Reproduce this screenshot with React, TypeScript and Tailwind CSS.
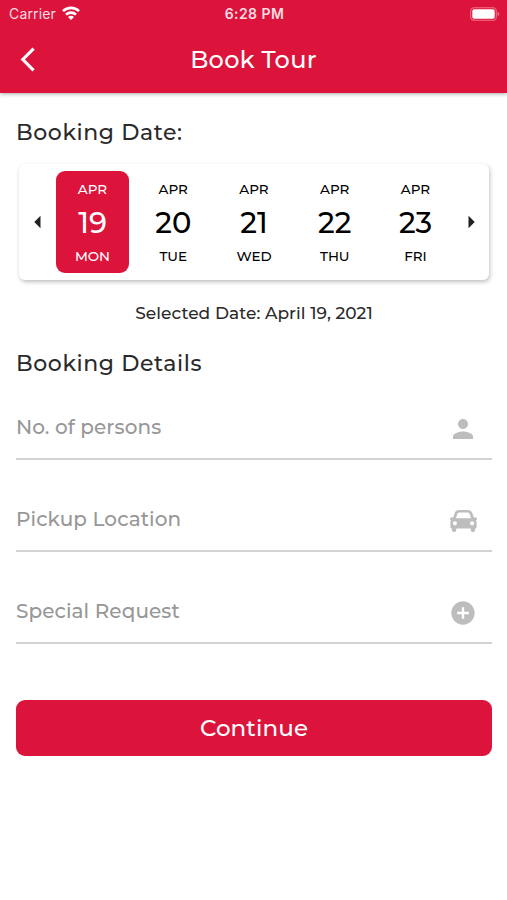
import React, { useState } from "react";
import { MdAddCircle, MdArrowLeft, MdArrowRight, MdPerson } from "react-icons/md";

type dayType = {
  date: number;
  day: string;
};

type fieldPropType = {
  label: string;
  icon: React.ReactNode;
};

const days: dayType[] = [
  { date: 19, day: "MON" },
  { date: 20, day: "TUE" },
  { date: 21, day: "WED" },
  { date: 22, day: "THU" },
  { date: 23, day: "FRI" },
];

const StatusBar = () => (
  <div className="grid h-7 grid-cols-3 items-center pl-[9px] pr-[7px] font-['Inter',sans-serif] text-[#fbdde3]">
    <div className="-mt-px flex items-center gap-[6px]">
      <span className="text-[14px] font-normal tracking-[0.15px]">Carrier</span>
      <svg className="mb-px h-[14px] w-[18px]" viewBox="0 0 18 14" fill="none" stroke="white" strokeWidth="2.6">
        <path d="M1 5.2a11.3 11.3 0 0 1 16 0" />
        <path d="M4 8.7a7.1 7.1 0 0 1 10 0" />
        <path d="M9 14L6 11a4.2 4.2 0 0 1 6 0z" fill="white" stroke="none" />
      </svg>
    </div>
    <span className="-mt-px text-center text-[14px] font-semibold tracking-[0.45px]">6:28 PM</span>
    <svg className="mb-px h-[14px] w-[30px] justify-self-end" viewBox="0 0 30 14">
      <rect x="0.7" y="0.7" width="25.6" height="12.6" rx="3.5" fill="none" stroke="#ef7088" strokeWidth="1.1" />
      <rect x="2.3" y="2.3" width="22.4" height="9.4" rx="1.8" fill="white" />
      <path d="M27.6 4.8v4.4c1-.4 1.7-1.2 1.7-2.2s-.7-1.8-1.7-2.2z" fill="#ef7088" />
    </svg>
  </div>
);

const CarIcon = () => (
  <svg className="h-[22px] w-[27px] shrink-0" viewBox="0 0 27 22" fill="currentColor">
    <path
      fillRule="evenodd"
      d="M9.500 0h8c2.600 0 4.200 1 4.900 3.200l1.500 4.300h1.600c1 0 1.500.5 1.500 1.300s-.5 1.300-1.100 1.300c.5.800.7 1.700.7 2.700v4.300c0 .9-.5 1.400-1.300 1.400h-.1v1.300a2.200 2.200 0 0 1-4.500 0v-1.300H6.300v1.300a2.200 2.200 0 0 1-4.500 0v-1.300h-.1c-.8 0-1.300-.5-1.300-1.400v-4.300c0-1 .2-1.900.7-2.700C.5 10.100 0 9.600 0 8.800s.5-1.300 1.500-1.300h1.600l1.500-4.300C5.300 1 6.900 0 9.500 0zM9.700 2.500c-1.300 0-2 .5-2.400 1.600L5.900 8.300h15.200l-1.400-4.200c-.4-1.100-1.100-1.600-2.400-1.600zM4.900 11.200a2.100 2.100 0 1 0 0 4.200 2.100 2.100 0 0 0 0-4.200zM22.100 11.200a2.100 2.100 0 1 0 0 4.200 2.100 2.100 0 0 0 0-4.200z"
    />
  </svg>
);

const Field = ({ label, icon }: fieldPropType) => {
  return (
    <label className="flex h-[60px] items-center border-b-2 border-[#d2d2d2]">
      <input
        placeholder={label}
        className="mb-[5px] min-w-0 flex-1 bg-transparent text-[20px] font-medium tracking-[0.08px] text-gray-800 placeholder:text-[#979797] focus:outline-none"
      />
      <span className="mr-[15px] flex w-7 justify-center text-[#bdbdbd]">{icon}</span>
    </label>
  );
};

const App = () => {
  const [selected, setSelected] = useState<number>(19);

  return (
    <div className="min-h-screen bg-white font-['Montserrat','Inter',sans-serif] font-medium text-[#2a2a2a]">
      <header className="h-[93px] bg-[#dc143c] shadow-[0_1px_4px_rgba(0,0,0,0.35)]">
        <StatusBar />
        <div className="grid h-16 grid-cols-[60px_1fr_60px] items-center text-white">
          <button type="button" className="pl-5">
            <svg className="mb-px h-[25px] w-4" viewBox="0 0 16 25" fill="none" stroke="currentColor" strokeWidth="3.1">
              <path d="M13.600 1.600L2.800 12.500l10.800 10.900" />
            </svg>
          </button>
          <h1 className="text-center text-[24px] tracking-[0.3px]">Book Tour</h1>
        </div>
      </header>

      <main className="pl-4 pr-[15px] pt-6">
        <h2 className="text-[22px] leading-8 tracking-[0.6px]">Booking Date:</h2>

        <section className="mx-[3px] mt-[15px] flex h-[116px] w-[470px] items-center rounded-md bg-white shadow-[1px_2px_4px_rgba(0,0,0,0.25)]">
          <button type="button" className="flex w-[37px] justify-center text-[#222]">
            <MdArrowLeft className="size-[30px] shrink-0" />
          </button>
          <div className="flex flex-1 justify-between">
            {days.map(({ date, day }) => (
              <button
                type="button"
                key={date}
                onClick={() => setSelected(date)}
                className={`flex h-[102px] w-[73px] flex-col items-center rounded-[9px] pt-2 ${
                  selected === date ? "bg-[#dc143c] text-white" : "text-black"
                }`}
              >
                <span className="text-[13.5px] leading-5">APR</span>
                <span className="text-[29px] leading-[47px]">{date}</span>
                <span className="text-[13.5px] leading-5">{day}</span>
              </button>
            ))}
          </div>
          <button type="button" className="flex w-[37px] justify-center text-[#222]">
            <MdArrowRight className="size-[30px] shrink-0" />
          </button>
        </section>

        <p className="mt-[21px] text-center text-[17px] leading-6 tracking-[0.05px]">
          Selected Date: April {selected}, 2021
        </p>

        <h2 className="mt-[23px] text-[22px] leading-8 tracking-[0.6px]">Booking Details</h2>

        <form className="mt-5">
          <div className="flex flex-col gap-8">
            <Field label="No. of persons" icon={<MdPerson className="size-[30px] shrink-0" />} />
            <Field label="Pickup Location" icon={<CarIcon />} />
            <Field label="Special Request" icon={<MdAddCircle className="size-7 shrink-0" />} />
          </div>
          <button
            type="button"
            className="mt-14 h-14 w-full rounded-[9px] bg-[#dc143c] text-[23px] tracking-[0.1px] text-white"
          >
            Continue
          </button>
        </form>
      </main>
    </div>
  );
};

export default App;
